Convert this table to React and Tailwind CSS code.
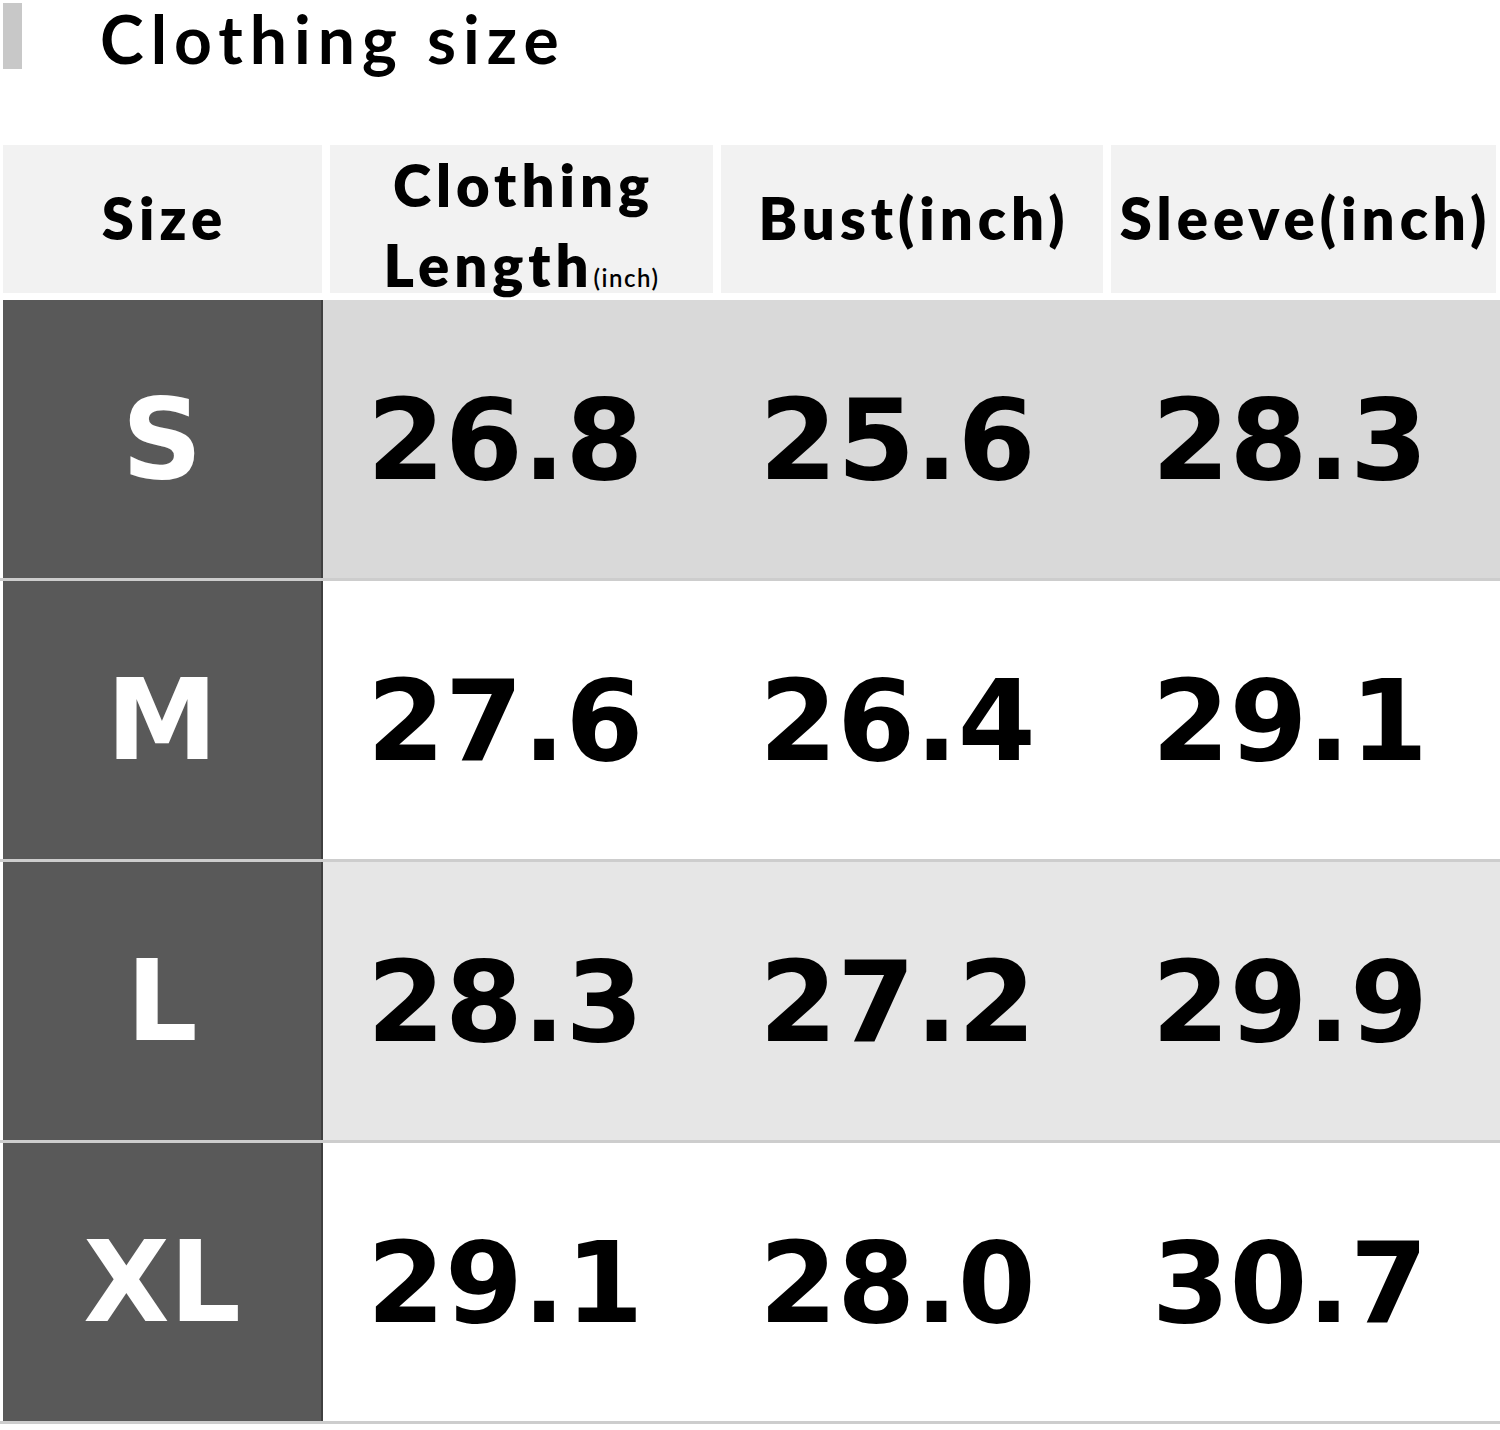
const rows = [
  { size: "S", values: ["26.8", "25.6", "28.3"], bg: "bg-[#d9d9d9]" },
  { size: "M", values: ["27.6", "26.4", "29.1"], bg: "bg-white" },
  { size: "L", values: ["28.3", "27.2", "29.9"], bg: "bg-[#e6e6e6]" },
  { size: "XL", values: ["29.1", "28.0", "30.7"], bg: "bg-white" },
];

const headFont = { fontFamily: 'Lato, "Open Sans", sans-serif' };

export default function App() {
  return (
    <div className="w-[1500px] h-[1430px] bg-white overflow-hidden">
      {/* title */}
      <div className="flex h-[145px] items-start">
        <div className="ml-[3px] mt-[3px] h-[66px] w-[19px] bg-[#c8c8c8]" />
        <h1
          className="ml-[78px] text-[66px] font-bold leading-[78px] tracking-[7px] text-black"
          style={headFont}
        >
          Clothing size
        </h1>
      </div>

      {/* header */}
      <div
        className="flex h-[155px] gap-[8px] pl-[3px] text-[58px] font-extrabold tracking-[5px] text-black"
        style={headFont}
      >
        <div className="flex h-[148px] w-[319px] items-center justify-center bg-[#f2f2f2] pb-[4px] pl-[4px]">
          Size
        </div>
        <div className="flex h-[148px] w-[383px] flex-col items-center bg-[#f2f2f2] leading-[80px]">
          <span className="pl-[4px]">Clothing</span>
          <span>
            Length
            <span className="text-[24px] font-semibold tracking-[1.5px]">(inch)</span>
          </span>
        </div>
        <div className="flex h-[148px] w-[382px] items-center justify-center bg-[#f2f2f2] pb-[4px] pl-[4px]">
          Bust(inch)
        </div>
        <div className="flex h-[148px] w-[385px] items-center justify-center bg-[#f2f2f2] pb-[4px] pl-[4px]">
          Sleeve(inch)
        </div>
      </div>

      {/* body */}
      <div className="flex flex-col" style={{ fontFamily: '"DejaVu Sans", sans-serif' }}>
        {rows.map((r) => (
          <div key={r.size} className="flex flex-col">
            <div className="flex h-[278px]">
              <div className="ml-[3px] flex w-[320px] items-center justify-center border-r-2 border-[#3f3f3f] bg-[#595959] text-[112px] font-bold text-white">
                {r.size}
              </div>
              <div className={`grid flex-1 grid-cols-3 items-center ${r.bg}`}>
                {r.values.map((v, i) => (
                  <div key={i} className="pl-[44px] pt-[2px] text-[112px] font-bold leading-none text-black">
                    {v}
                  </div>
                ))}
              </div>
            </div>
            <div className="h-[3px] bg-[#cdcdcd]" />
          </div>
        ))}
      </div>
    </div>
  );
}
